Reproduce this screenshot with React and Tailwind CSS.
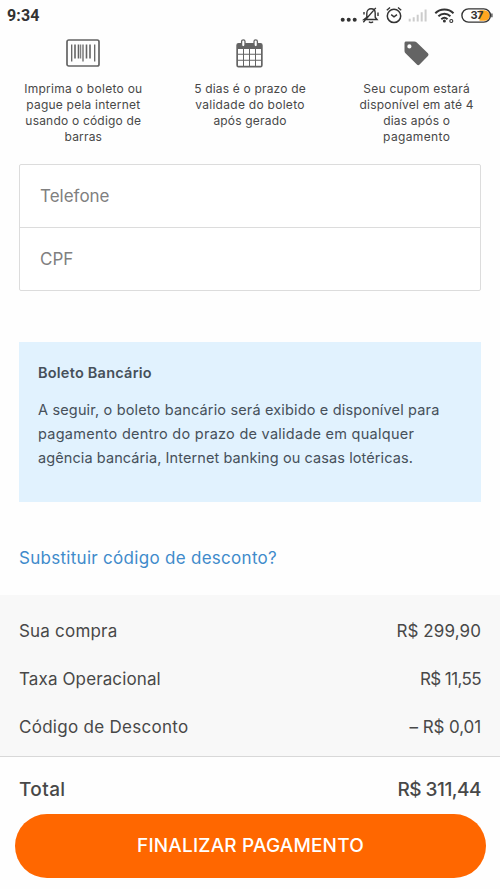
const steps = [
  {
    icon: BarcodeIcon,
    lines: [
      { text: 'Imprima o boleto ou', tracking: 'tracking-[0.28px]' },
      { text: 'pague pela internet', tracking: 'tracking-[0.22px]' },
      { text: 'usando o código de', tracking: 'tracking-[0.2px]' },
      { text: 'barras', tracking: 'tracking-[0.18px]' },
    ],
  },
  {
    icon: CalendarIcon,
    lines: [
      { text: '5 dias é o prazo de', tracking: 'tracking-[0.18px]' },
      { text: 'validade do boleto', tracking: 'tracking-[0.28px]' },
      { text: 'após gerado', tracking: 'tracking-[0.18px]' },
    ],
  },
  {
    icon: TagIcon,
    lines: [
      { text: 'Seu cupom estará', tracking: 'tracking-[0.24px]' },
      { text: 'disponível em até 4', tracking: 'tracking-[0.2px]' },
      { text: 'dias após o', tracking: 'tracking-[0.18px]' },
      { text: 'pagamento', tracking: 'tracking-[0.36px]' },
    ],
  },
];

const summary = [
  { label: 'Sua compra', value: 'R$ 299,90', labelTracking: 'tracking-[0.2px]', valueTracking: 'tracking-[0.1px]' },
  { label: 'Taxa Operacional', value: 'R$ 11,55', labelTracking: 'tracking-[0.12px]', valueTracking: 'tracking-[-0.6px]' },
  { label: 'Código de Desconto', value: '– R$ 0,01', labelTracking: 'tracking-[0.28px]', valueTracking: 'tracking-[-0.1px]' },
];

function BarcodeIcon() {
  return (
    <svg width="34" height="28" viewBox="0 0 34 28" fill="none" stroke="#646464">
      <rect x="1" y="1" width="32" height="26" rx="1.8" strokeWidth="1.7" />
      <path d="M5.7 5.5v17M17 5.5v17M28.7 5.5v17" strokeWidth="1.3" />
      <path d="M9 5.500v14M12.500 5.500v14M20.500 5.500v14M24 5.500v14" strokeWidth="1.600" />
      <path d="M14.700 5.500v14" strokeWidth="1" />
    </svg>
  );
}

function CalendarIcon() {
  return (
    <svg width="27" height="29" viewBox="0 0 27 29" fill="none">
      <path d="M2.5 4h22A2.2 2.2 0 0 1 26.7 6.2v20a2.2 2.2 0 0 1-2.2 2.2h-22A2.2 2.2 0 0 1 .3 26.2v-20A2.2 2.2 0 0 1 2.5 4Z" fill="#646464" />
      <path d="M2 10h5v4.700H2ZM8 10h5v4.700H8ZM14 10h5v4.700h-5ZM20 10h5v4.700h-5ZM2 15.700h5v5H2ZM8 15.700h5v5H8ZM14 15.700h5v5h-5ZM20 15.700h5v5h-5ZM2 21.700h5v5H2ZM8 21.700h5v5H8ZM14 21.700h5v5h-5ZM20 21.700h5v5h-5Z" fill="#fff" />
      <rect x="5.600" y="0.800" width="3.400" height="7" rx="1.700" fill="#fff" stroke="#646464" strokeWidth="1.300" />
      <rect x="18" y="0.800" width="3.400" height="7" rx="1.700" fill="#fff" stroke="#646464" strokeWidth="1.300" />
    </svg>
  );
}

function TagIcon() {
  return (
    <svg width="25" height="25" viewBox="0 0 25 25">
      <path
        fillRule="evenodd"
        fill="#646464"
        d="M2.2.5h8.1c.9 0 1.8.4 2.5 1.1l11.100 10.700c.8.8.8 1.900 0 2.700l-8.300 8.600c-.8.8-1.900.8-2.700 0L1.500 12.300C.8 11.600.5 10.900.5 10V2.200C.5 1.200 1.200.5 2.200.5Zm3.200 2.800a2.100 2.100 0 1 0 0 4.200 2.100 2.100 0 0 0 0-4.200Z"
      />
    </svg>
  );
}

function StatusIcons() {
  return (
    <svg width="154" height="20" viewBox="340 6 154 20" fill="none" stroke="#333" className="ml-auto">
      <g fill="#333" stroke="none">
        <circle cx="342.700" cy="19.800" r="2" />
        <circle cx="348.700" cy="19.800" r="2" />
        <circle cx="354.700" cy="19.800" r="2" />
      </g>
      {/* muted bell */}
      <path d="M364 19.500h13l-1.800-2.200v-4.100c0-2.600-1.700-4.400-4.100-4.400s-4.300 1.800-4.300 4.400v4.100ZM369 21.600c.8 1.200 3.200 1.200 4 0M363.300 22.300 375.800 7.900M364 12v2.500M378 12.500v3.500" strokeWidth="1.400" />
      {/* alarm clock */}
      <circle cx="394" cy="15.900" r="6.700" strokeWidth="1.500" />
      <path d="m386.800 10.200 3.200-2.700M401.200 10.200l-3.200-2.700M391.200 14.600l2.800 2.300 3-2.300" strokeWidth="1.400" />
      {/* mobile signal */}
      <path d="M409.700 21.500v-2.800M413.700 21.500v-4.300M417.700 21.500v-6.800M421.700 21.500v-9.300M425.600 21.500v-12" stroke="#ccc" strokeWidth="2" />
      {/* wifi */}
      <path d="M435.300 13.300c5-5 13.200-5 18.200 0M438.400 16.300c3.500-3.300 8.500-3.300 12 0M441.300 19.200c1.900-1.700 4.300-1.700 6.200 0" strokeWidth="2" />
      <circle cx="444.400" cy="21" r="1.500" fill="#333" stroke="none" />
      <circle cx="451.300" cy="21" r="1.500" strokeWidth="1.100" />
      {/* battery */}
      <path d="M479.500 10.300h5a5.200 5.200 0 0 1 0 10.400h-5Z" fill="#ffa61f" stroke="none" />
      <rect x="461.900" y="8.900" width="28.500" height="13.200" rx="6.600" strokeWidth="1.400" />
      <path d="M491.900 13.500v3.800" strokeWidth="1.200" />
      <text x="470.600" y="19.400" fontSize="11" fontWeight="700" letterSpacing="-0.600" fontFamily="Inter, sans-serif" fill="#333" stroke="none">37</text>
    </svg>
  );
}

export default function App() {
  return (
    <div className="flex h-[889px] w-[500px] flex-col overflow-hidden bg-[#fefefe] font-['Inter',sans-serif] text-[#484848]">
      <header className="flex h-8 shrink-0 items-center pl-[7px] pr-[6px]">
        <span className="font-['Roboto',sans-serif] text-[16px] font-bold leading-8 tracking-[0.15px] text-[#333]">9:34</span>
        <StatusIcons />
      </header>

      <section className="grid h-[132px] shrink-0 grid-cols-3 text-center">
        {steps.map(({ icon: Icon, lines }) => (
          <div key={lines[0].text} className="flex flex-col items-center">
            <div className="mt-[5px] flex h-8 items-center">
              <Icon />
            </div>
            <p className="mt-[11.5px] text-[12px] leading-[16.2px]">
              {lines.map((line) => (
                <span key={line.text} className={`block whitespace-nowrap ${line.tracking}`}>{line.text}</span>
              ))}
            </p>
          </div>
        ))}
      </section>

      <form className="mx-[19px] h-[127px] shrink-0 rounded-[2px] border border-[#dcdcdc] bg-white text-[17px] text-[#808080]">
        <div className="flex h-[63px] items-center border-b border-[#dcdcdc] pl-5 pt-0.5">Telefone</div>
        <div className="flex h-[62px] items-center pl-5 pt-0.5">CPF</div>
      </form>

      <section className="mx-[19px] mt-[51px] h-[160px] shrink-0 bg-[#e1f2fe] px-[19px] pt-[19px] text-[#46505a]">
        <h2 className="text-[14.5px] font-semibold leading-6 tracking-[0.23px]">Boleto Bancário</h2>
        <p className="mt-[13px] whitespace-nowrap text-[14.5px] leading-6">
          <span className="block tracking-[0.16px]">A seguir, o boleto bancário será exibido e disponível para</span>
          <span className="block tracking-[0.26px]">pagamento dentro do prazo de validade em qualquer</span>
          <span className="block tracking-[0.09px]">agência bancária, Internet banking ou casas lotéricas.</span>
        </p>
      </section>

      <a className="mx-[19px] mt-[44px] block h-[49px] shrink-0 text-[17px] leading-6 tracking-[0.29px] text-[#3f8bcb]">Substituir código de desconto?</a>

      <section className="h-[162px] shrink-0 border-b border-[#d8d8d8] bg-[#f8f8f8] px-[19px] pt-[13px]">
        {summary.map((row) => (
          <div key={row.label} className="flex h-12 items-center justify-between text-[17px]">
            <span className={row.labelTracking}>{row.label}</span>
            <span className={row.valueTracking}>{row.value}</span>
          </div>
        ))}
      </section>

      <footer className="px-[15px]">
        <div className="flex h-[57px] items-center justify-between px-1 pt-[9px] text-[19px] font-medium">
          <span className="tracking-[0.4px]">Total</span>
          <span className="tracking-[-0.5px]">R$ 311,44</span>
        </div>
        <button className="block h-16 w-[471px] rounded-full bg-[#ff6700] text-[19px] font-medium tracking-[0.18px] text-white">FINALIZAR PAGAMENTO</button>
      </footer>
    </div>
  );
}
